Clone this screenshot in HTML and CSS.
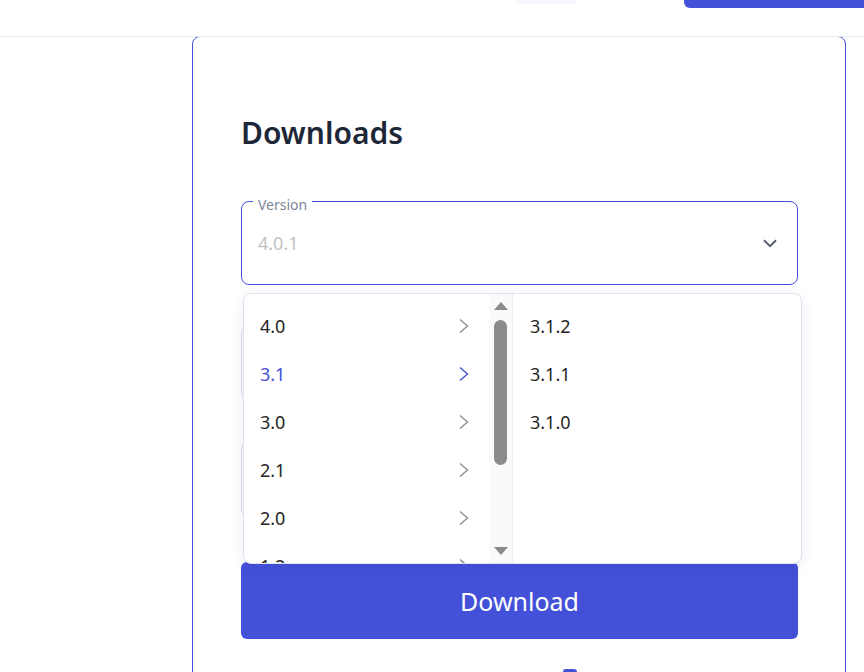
FILE: index.html
```html
<!DOCTYPE html>
<html lang="en">
<head>
<meta charset="utf-8">
<title>Downloads</title>
<link rel="stylesheet" href="styles.css">
</head>
<body>
<header class="topbar">
  <div class="nav-chip"></div>
  <div class="top-btn"></div>
</header>
<main class="page">
  <section class="card">
    <h1 class="title">Downloads</h1>
    <div class="field-wrap">
      <div class="select">
        <span class="select-label">Version</span>
        <span class="select-value">4.0.1</span>
        <svg class="select-caret" width="14" height="9" viewBox="0 0 14 9"><path d="M1 1.2 L7 7.2 L13 1.2" fill="none" stroke="#5a6070" stroke-width="2"/></svg>
      </div>
      <div class="menu">
        <div class="menu-col menu-col-left">
          <ul class="menu-list">
            <li class="menu-item"><span>4.0</span><svg class="chev" width="12" height="16" viewBox="0 0 12 16"><path d="M2 1.5 L9.5 8 L2 14.5" fill="none" stroke="currentColor" stroke-width="1.4"/></svg></li>
            <li class="menu-item active"><span>3.1</span><svg class="chev" width="12" height="16" viewBox="0 0 12 16"><path d="M2 1.5 L9.5 8 L2 14.5" fill="none" stroke="currentColor" stroke-width="1.4"/></svg></li>
            <li class="menu-item"><span>3.0</span><svg class="chev" width="12" height="16" viewBox="0 0 12 16"><path d="M2 1.5 L9.5 8 L2 14.5" fill="none" stroke="currentColor" stroke-width="1.4"/></svg></li>
            <li class="menu-item"><span>2.1</span><svg class="chev" width="12" height="16" viewBox="0 0 12 16"><path d="M2 1.5 L9.5 8 L2 14.5" fill="none" stroke="currentColor" stroke-width="1.4"/></svg></li>
            <li class="menu-item"><span>2.0</span><svg class="chev" width="12" height="16" viewBox="0 0 12 16"><path d="M2 1.5 L9.5 8 L2 14.5" fill="none" stroke="currentColor" stroke-width="1.4"/></svg></li>
            <li class="menu-item"><span>1.2</span><svg class="chev" width="12" height="16" viewBox="0 0 12 16"><path d="M2 1.5 L9.5 8 L2 14.5" fill="none" stroke="currentColor" stroke-width="1.4"/></svg></li>
          </ul>
          <div class="scrollbar">
            <div class="sb-up"></div>
            <div class="sb-thumb"></div>
            <div class="sb-space"></div>
            <div class="sb-down"></div>
          </div>
        </div>
        <div class="menu-col menu-col-right">
          <ul class="menu-list">
            <li class="menu-item"><span>3.1.2</span></li>
            <li class="menu-item"><span>3.1.1</span></li>
            <li class="menu-item"><span>3.1.0</span></li>
          </ul>
        </div>
      </div>
    </div>
    <div class="field field-hidden"></div>
    <div class="field field-hidden"></div>
    <button class="download-btn">Download</button>
    <div class="extra-row"><span class="extra-icon"></span></div>
  </section>
</main>
</body>
</html>
```
FILE: styles.css
```css
html, body {
  margin: 0;
  padding: 0;
  background: #ffffff;
  font-family: "Noto Sans", "Open Sans", sans-serif;
  overflow: hidden;
}

.topbar {
  position: relative;
  z-index: 5;
  height: 36px;
  border-bottom: 1px solid #ebebf4;
  background: #ffffff;
  display: flex;
  align-items: flex-start;
  overflow: hidden;
}

.nav-chip {
  margin-left: 516px;
  margin-top: -26px;
  width: 60px;
  height: 30px;
  border-radius: 4px;
  background: #f6f7fd;
  flex-shrink: 0;
}

.top-btn {
  margin-left: 108px;
  margin-top: -32px;
  width: 200px;
  height: 40px;
  border-radius: 6px;
  background: #4350d8;
  flex-shrink: 0;
}

.page {
  display: flex;
  padding-left: 192px;
}

.card {
  width: 654px;
  box-sizing: border-box;
  margin-top: -1px;
  border: 1px solid #4350d8;
  border-radius: 8px;
  padding: 76px 47px 40px 48px;
  display: flex;
  flex-direction: column;
  height: 700px;
}

.title {
  margin: 0 0 48px 0;
  font-size: 30px;
  line-height: 40px;
  font-weight: 600;
  color: #1e2737;
}

.field-wrap {
  position: relative;
  z-index: 3;
}

.select {
  position: relative;
  height: 84px;
  box-sizing: border-box;
  border: 1px solid #4350d8;
  border-radius: 8px;
  display: flex;
  align-items: center;
  justify-content: space-between;
  padding: 0 20px 0 16px;
}

.select-label {
  position: absolute;
  top: -5px;
  left: 11px;
  padding: 0 5px;
  background: #ffffff;
  font-size: 14px;
  line-height: 16px;
  color: #7b8699;
}

.select-value {
  font-size: 18px;
  color: #c3c3c6;
}

.select-caret {
  display: block;
}

.menu {
  position: absolute;
  top: 92px;
  left: 2px;
  width: 559px;
  height: 271px;
  box-sizing: border-box;
  background: #ffffff;
  border: 1px solid #dfe3ef;
  border-radius: 8px;
  box-shadow: 0 3px 14px rgba(40, 50, 110, 0.08);
  display: flex;
  overflow: hidden;
}

.menu-col {
  display: flex;
  height: 100%;
}

.menu-col-left {
  width: 269px;
  box-sizing: border-box;
  border-right: 1px solid #ececef;
}

.menu-col-right {
  flex: 1;
}

.menu-list {
  list-style: none;
  margin: 0;
  padding: 8px 0 0 0;
  flex: 1;
  overflow: hidden;
}

.menu-col-left .menu-list {
  padding-left: 16px;
  padding-right: 19px;
}

.menu-col-right .menu-list {
  padding-left: 17px;
}

.menu-item {
  height: 48px;
  display: flex;
  align-items: center;
  justify-content: space-between;
  font-size: 18px;
  color: #262626;
}

.menu-item .chev {
  color: #8d8d8d;
  display: block;
}

.menu-item.active {
  color: #4350d8;
}

.menu-item.active .chev {
  color: #4350d8;
}

.scrollbar {
  width: 23px;
  background: #fafafa;
  display: flex;
  flex-direction: column;
  align-items: center;
  padding-top: 8px;
  box-sizing: border-box;
}

.sb-up {
  width: 0;
  height: 0;
  border-left: 7.5px solid transparent;
  border-right: 7.5px solid transparent;
  border-bottom: 8px solid #8b8b8b;
}

.sb-thumb {
  margin-top: 10px;
  width: 13px;
  height: 145px;
  border-radius: 7px;
  background: #8b8b8b;
}

.sb-space {
  flex: 1;
}

.sb-down {
  width: 0;
  height: 0;
  margin-bottom: 8px;
  border-left: 7.5px solid transparent;
  border-right: 7.5px solid transparent;
  border-top: 8px solid #8b8b8b;
}

.field {
  height: 76px;
  box-sizing: border-box;
  border: 1px solid #d9dce8;
  border-radius: 8px;
  margin-top: 40px;
}

.download-btn {
  margin-top: 45px;
  height: 77px;
  border: none;
  border-radius: 6px;
  background: #4350d8;
  color: #ffffff;
  font-family: "Noto Sans", "Open Sans", sans-serif;
  font-size: 25px;
  font-weight: 400;
  cursor: pointer;
  position: relative;
  z-index: 1;
}

.extra-row {
  margin-top: 30px;
  display: flex;
  padding-left: 322px;
}

.extra-icon {
  width: 14px;
  height: 14px;
  border-radius: 3px;
  background: #4350d8;
}
```
